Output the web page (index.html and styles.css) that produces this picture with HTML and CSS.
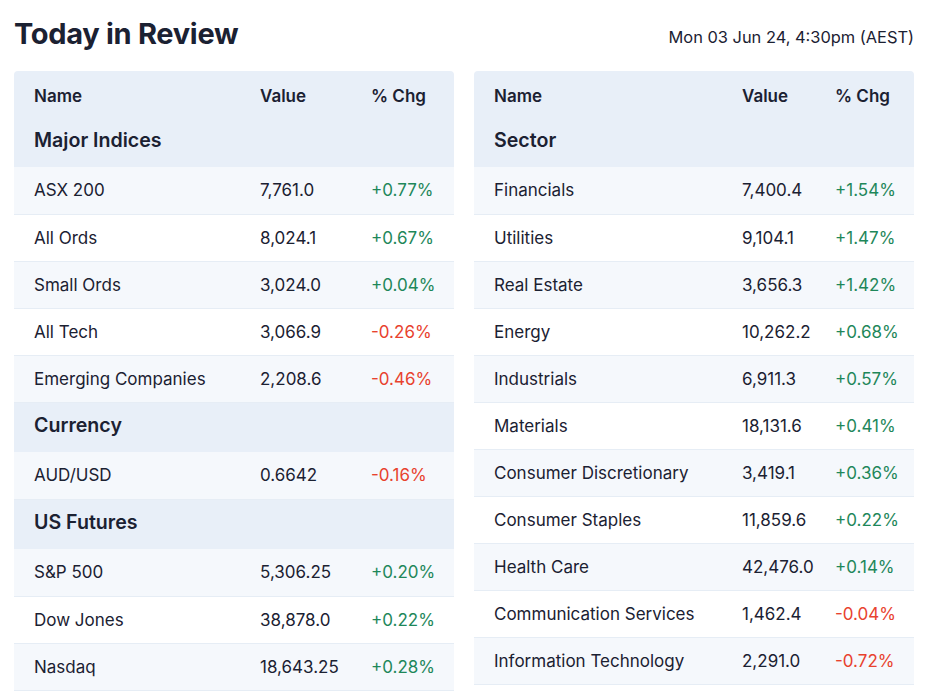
FILE: index.html
```html
<!DOCTYPE html>
<html lang="en">
<head>
<meta charset="utf-8">
<title>Today in Review</title>
<link rel="stylesheet" href="styles.css">
</head>
<body>
<div class="page">
  <header class="top">
    <h1 class="title">Today in Review</h1>
    <div class="date">Mon 03 Jun 24, 4:30pm (AEST)</div>
  </header>
  <div class="tables">
    <table class="market left">
      <colgroup><col class="c-name"><col class="c-val"><col class="c-chg"></colgroup>
      <thead>
        <tr class="head"><th>Name</th><th>Value</th><th>% Chg</th></tr>
      </thead>
      <tbody>
        <tr class="group"><th colspan="3">Major Indices</th></tr>
        <tr class="alt"><td>ASX 200</td><td>7,761.0</td><td class="up">+0.77%</td></tr>
        <tr><td>All Ords</td><td>8,024.1</td><td class="up">+0.67%</td></tr>
        <tr class="alt"><td>Small Ords</td><td>3,024.0</td><td class="up">+0.04%</td></tr>
        <tr><td>All Tech</td><td>3,066.9</td><td class="down">-0.26%</td></tr>
        <tr class="alt"><td>Emerging Companies</td><td>2,208.6</td><td class="down">-0.46%</td></tr>
        <tr class="group"><th colspan="3">Currency</th></tr>
        <tr class="alt"><td>AUD/USD</td><td>0.6642</td><td class="down">-0.16%</td></tr>
        <tr class="group"><th colspan="3">US Futures</th></tr>
        <tr class="alt"><td>S&amp;P 500</td><td>5,306.25</td><td class="up">+0.20%</td></tr>
        <tr><td>Dow Jones</td><td>38,878.0</td><td class="up">+0.22%</td></tr>
        <tr class="alt"><td>Nasdaq</td><td>18,643.25</td><td class="up">+0.28%</td></tr>
      </tbody>
    </table>
    <table class="market right">
      <colgroup><col class="c-name"><col class="c-val"><col class="c-chg"></colgroup>
      <thead>
        <tr class="head"><th>Name</th><th>Value</th><th>% Chg</th></tr>
      </thead>
      <tbody>
        <tr class="group"><th colspan="3">Sector</th></tr>
        <tr class="alt"><td>Financials</td><td>7,400.4</td><td class="up">+1.54%</td></tr>
        <tr><td>Utilities</td><td>9,104.1</td><td class="up">+1.47%</td></tr>
        <tr class="alt"><td>Real Estate</td><td>3,656.3</td><td class="up">+1.42%</td></tr>
        <tr><td>Energy</td><td>10,262.2</td><td class="up">+0.68%</td></tr>
        <tr class="alt"><td>Industrials</td><td>6,911.3</td><td class="up">+0.57%</td></tr>
        <tr><td>Materials</td><td>18,131.6</td><td class="up">+0.41%</td></tr>
        <tr class="alt"><td>Consumer Discretionary</td><td>3,419.1</td><td class="up">+0.36%</td></tr>
        <tr><td>Consumer Staples</td><td>11,859.6</td><td class="up">+0.22%</td></tr>
        <tr class="alt"><td>Health Care</td><td>42,476.0</td><td class="up">+0.14%</td></tr>
        <tr><td>Communication Services</td><td>1,462.4</td><td class="down">-0.04%</td></tr>
        <tr class="alt"><td>Information Technology</td><td>2,291.0</td><td class="down">-0.72%</td></tr>
      </tbody>
    </table>
  </div>
</div>
</body>
</html>
```
FILE: styles.css
```css
* { box-sizing: border-box; }
html, body { margin: 0; padding: 0; background: #fff; }
body {
  font-family: Inter, "Noto Sans", "Liberation Sans", sans-serif;
  color: #1b2132;
}
.page { padding: 0 17px 0 14px; }
.top {
  display: flex;
  justify-content: space-between;
  align-items: flex-end;
  height: 71px;
}
.title {
  margin: 0 0 19px;
  font-size: 29px;
  font-weight: 700;
  letter-spacing: -0.3px;
  line-height: 36px;
}
.date {
  font-size: 16.4px;
  line-height: 20px;
  margin-bottom: 24px;
}
.tables {
  display: flex;
  gap: 20px;
  align-items: flex-start;
}
.market {
  width: 440px;
  border-collapse: collapse;
  table-layout: fixed;
  font-size: 17px;
}
.market.left .c-name { width: 246px; }
.market.left .c-val { width: 111px; }
.market.right .c-name { width: 268px; }
.market.right .c-val { width: 93px; }
.market th, .market td {
  text-align: left;
  padding: 0;
  white-space: nowrap;
}
.market th:first-child, .market td:first-child { padding-left: 20px; }
.head th {
  background: #e8eff8;
  height: 46px;
  font-weight: 600;
  padding-top: 4px;
}
.head th:first-child { border-top-left-radius: 4px; }
.head th:last-child { border-top-right-radius: 4px; }
.group th {
  background: #e8eff8;
  height: 50px;
  font-size: 19.6px;
  font-weight: 600;
  padding-bottom: 4px;
}
.market td {
  height: 47px;
  border-bottom: 1px solid #e6edf5;
  background: #fff;
}
.market tr.alt td { background: #f5f8fc; }
.up { color: #1e875a; }
.down { color: #e8422e; }
```
